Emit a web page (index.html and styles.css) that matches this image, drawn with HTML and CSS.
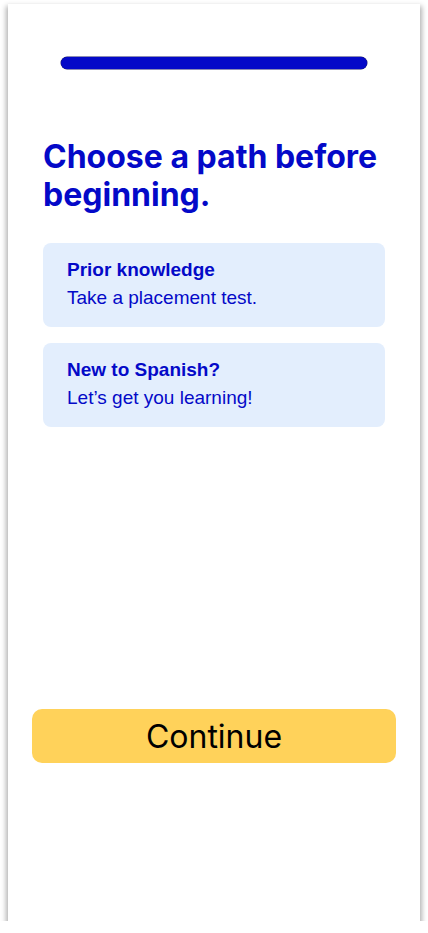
FILE: index.html
```html
<!DOCTYPE html>
<html lang="en">
<head>
<meta charset="utf-8">
<title>Choose a path</title>
<link rel="stylesheet" href="styles.css">
</head>
<body>
<div class="phone">
  <div class="progress"></div>
  <h1 class="heading">Choose a path before beginning.</h1>
  <div class="options">
    <div class="option">
      <div class="option-title">Prior knowledge</div>
      <div class="option-sub">Take a placement test.</div>
    </div>
    <div class="option">
      <div class="option-title">New to Spanish?</div>
      <div class="option-sub">Let’s get you learning!</div>
    </div>
  </div>
  <div class="spacer"></div>
  <button class="continue">Continue</button>
</div>
</body>
</html>
```
FILE: styles.css
```css
* { box-sizing: border-box; }
html, body { margin: 0; padding: 0; background: #ffffff; }
body { font-family: Inter, "Liberation Sans", sans-serif; }
.phone {
  margin: 4px 8px 0;
  width: 412px;
  height: 917px;
  background: #ffffff;
  box-shadow: 0 4px 5px 2px rgba(0, 0, 0, 0.3);
  display: flex;
  flex-direction: column;
  padding: 53px 24px 0;
}
.progress {
  margin: 0 29px;
  height: 12px;
  border-radius: 6px;
  background: #0409c8;
  box-shadow: 0 0 0 0.5px #1a1a6a;
}
.heading {
  margin: 69px 11px 0;
  font-family: Inter, sans-serif;
  font-weight: 700;
  font-size: 32px;
  line-height: 38px;
  color: #0409c8;
  letter-spacing: 0;
}
.options {
  margin: 29px 11px 0;
  display: flex;
  flex-direction: column;
  gap: 16px;
}
.option {
  background: #e3eefd;
  border-radius: 8px;
  height: 84px;
  padding: 15px 24px 0;
  display: flex;
  flex-direction: column;
  gap: 4px;
  color: #0409c8;
  font-family: "Liberation Sans", Arial, sans-serif;
  font-size: 19px;
  line-height: 24px;
}
.option-title { font-weight: 700; }
.option-sub { font-weight: 400; }
.spacer { flex: 0 0 282px; }
.continue {
  height: 54px;
  border: none;
  border-radius: 10px;
  background: #ffd25a;
  color: #000000;
  font-family: Inter, sans-serif;
  font-size: 32px;
  font-weight: 400;
  padding: 0;
}
```
